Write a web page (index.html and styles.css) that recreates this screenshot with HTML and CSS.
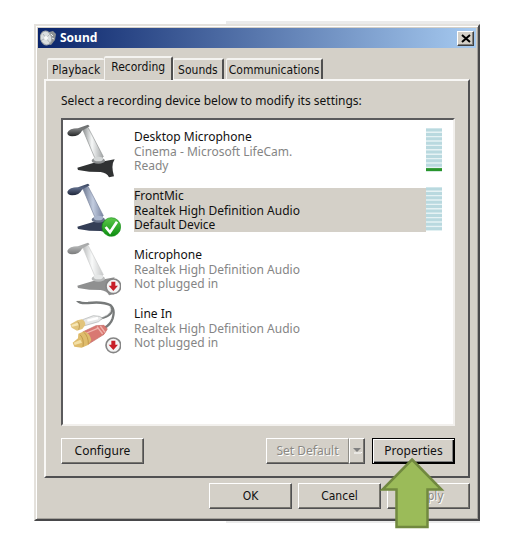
FILE: index.html
```html
<!DOCTYPE html>
<html lang="en">
<head>
<meta charset="utf-8">
<title>Sound</title>
<link rel="stylesheet" href="styles.css">
</head>
<body>
<svg class="defs" aria-hidden="true">
  <defs>
    <linearGradient id="stem" x1="0" y1="0" x2="1" y2="0">
      <stop offset="0" stop-color="#8c8f90"/><stop offset=".45" stop-color="#f6f8f8"/><stop offset="1" stop-color="#a0a3a4"/>
    </linearGradient>
    <linearGradient id="stem-blue" x1="0" y1="0" x2="1" y2="0">
      <stop offset="0" stop-color="#6d7890"/><stop offset=".5" stop-color="#c3cde0"/><stop offset="1" stop-color="#7783a0"/>
    </linearGradient>
    <linearGradient id="head" x1="0" y1="0" x2="0" y2="1">
      <stop offset="0" stop-color="#6b6d6e"/><stop offset=".4" stop-color="#77797a"/><stop offset="1" stop-color="#222425"/>
    </linearGradient>
    <linearGradient id="head-blue" x1="0" y1="0" x2="0" y2="1">
      <stop offset="0" stop-color="#34405a"/><stop offset=".4" stop-color="#5a6784"/><stop offset="1" stop-color="#1d2538"/>
    </linearGradient>
    <linearGradient id="ok" x1="0" y1="0" x2="0" y2="1">
      <stop offset="0" stop-color="#5cc94a"/><stop offset="1" stop-color="#0c8d10"/>
    </linearGradient>
    <path id="mic-stem" d="M50 16L66 10 112 98Q102 110 86 101z"/>
    <path id="mic-head" d="M4 26Q10 13 36 13L66 2 71 7 48 20Q40 37 18 37 4 36 4 26z"/>
    <path id="mic-base" d="M34 131L84 116 114 112 146 106Q134 124 144 157L129 160Q123 147 104 144L70 143 36 138z"/>
    <g id="meter-bars">
      <path d="M0 2h16M0 6.4h16M0 10.8h16M0 15.2h16M0 19.6h16M0 24h16M0 28.4h16M0 32.8h16M0 37.2h16" stroke="#b9d9df" stroke-width="3"/>
    </g>
    <g id="unplugged">
      <circle cx="142" cy="133" r="22" fill="#f4f4f4" stroke="#858585" stroke-width="5"/>
      <path d="M136 119h12v12h8l-14 16l-14-16h8z" fill="#c81e28"/>
    </g>
  </defs>
</svg>
<main class="stage">
<section class="window" aria-label="Sound">
  <header class="titlebar">
    <svg class="app-icon" viewBox="0 0 16 16" aria-hidden="true">
      <path d="M9 2l4-1 3 3-1 6-4 5-4-1z" fill="#8d9194"/>
      <ellipse cx="6" cy="8" rx="5.5" ry="7" transform="rotate(-14 6 8)" fill="#d9dddf" stroke="#a2a7aa"/>
      <path d="M3 4l3 4 4 5M10 4L6 8 2 10" stroke="#aeb4b8" fill="none"/>
      <circle cx="6" cy="8" r="2" fill="#f8f9f9"/>
      <path d="M11 4l2 2M12 8l2 1" stroke="#edf0f1"/>
    </svg>
    <h1>Sound</h1>
    <button class="close" aria-label="Close"><svg viewBox="0 0 10 9" aria-hidden="true"><path d="M1 1l8 7M9 1L1 8" stroke="#000" stroke-width="2"/></svg></button>
  </header>
  <div class="body">
    <nav class="tabs" role="tablist">
      <button class="tab playback" role="tab">Playback</button>
      <button class="tab active" role="tab" aria-selected="true">Recording</button>
      <button class="tab" role="tab">Sounds</button>
      <button class="tab last" role="tab">Communications</button>
    </nav>
    <div class="panel" role="tabpanel">
      <p class="hint">Select a recording device below to modify its settings:</p>
      <ul class="devices">
        <li class="device">
          <svg class="icon" viewBox="0 0 165 165" aria-hidden="true">
            <use href="#mic-stem" fill="url(#stem)" stroke="#8f9292" stroke-width="2"/>
            <use href="#mic-head" fill="url(#head)"/>
            <use href="#mic-base" fill="#303233"/>
            <ellipse cx="97" cy="110" rx="20" ry="9" fill="#8d9091"/><ellipse cx="97" cy="105" rx="14" ry="7" fill="#d5d8d8"/>
          </svg>
          <div class="text"><strong>Desktop Microphone</strong><span>Cinema - Microsoft LifeCam.</span><span>Ready</span></div>
          <svg class="meter" viewBox="0 0 16 44" role="img" aria-label="Input level"><use href="#meter-bars"/><path d="M0 41.6h16" stroke="#29952c" stroke-width="3"/></svg>
        </li>
        <li class="device selected">
          <svg class="icon" viewBox="0 0 165 165" aria-hidden="true">
            <use href="#mic-stem" fill="url(#stem-blue)" stroke="#77829b" stroke-width="2"/>
            <use href="#mic-head" fill="url(#head-blue)"/>
            <use href="#mic-base" fill="#343e56"/>
            <ellipse cx="97" cy="110" rx="20" ry="9" fill="#67728a"/><ellipse cx="97" cy="105" rx="14" ry="7" fill="#aab6cd"/>
            <circle cx="136" cy="132" r="28" fill="url(#ok)" stroke="#169018" stroke-width="2"/>
            <path d="M119 132l13 16 21-32" fill="none" stroke="#fff" stroke-width="8"/>
          </svg>
          <div class="text"><strong>FrontMic</strong><span>Realtek High Definition Audio</span><span>Default Device</span></div>
          <svg class="meter" viewBox="0 0 16 44" role="img" aria-label="Input level"><use href="#meter-bars"/><path d="M0 41.6h16" stroke="#b9d9df" stroke-width="3"/></svg>
        </li>
        <li class="device">
          <svg class="icon" viewBox="0 0 165 165" aria-hidden="true">
            <g opacity=".6">
            <use href="#mic-stem" fill="url(#stem)" stroke="#a8abab" stroke-width="2"/>
            <use href="#mic-head" fill="url(#head)"/>
            <use href="#mic-base" fill="#454748"/>
            <ellipse cx="97" cy="110" rx="20" ry="9" fill="#8d9091"/><ellipse cx="97" cy="105" rx="14" ry="7" fill="#d5d8d8"/>
            </g>
            <use href="#unplugged"/>
          </svg>
          <div class="text"><strong>Microphone</strong><span>Realtek High Definition Audio</span><span>Not plugged in</span></div>
        </li>
        <li class="device">
          <svg class="icon" viewBox="0 0 165 165" aria-hidden="true">
            <g fill="none" stroke-linecap="round">
              <path d="M34 -1Q42 8 66 6Q112 1 134 13Q148 26 140 52Q134 70 114 82" stroke="#777a7a" stroke-width="7"/>
              <path d="M136 16Q146 38 114 50L100 54" stroke="#777a7a" stroke-width="6"/>
              <path d="M132 17Q142 36 112 48" stroke="#bcbfbf" stroke-width="2"/>
            </g>
            <path d="M50 56L82 44 100 46 110 51 98 62 56 74z" fill="#e6e7e7" stroke="#aeb0b0" stroke-width="2"/>
            <path d="M64 59l32-8" stroke="#fff" stroke-width="7"/>
            <path d="M13 70L34 58 48 55Q58 60 58 72L49 84 33 89 17 80z" fill="#e2c47b"/>
            <path d="M16 72l18-7 4 8-19 4z" fill="#f6e6b4"/><path d="M35 62q9 8 3 24" stroke="#b18d43" stroke-width="2" fill="none"/>
            <path d="M50 93L90 74 114 73 124 84 114 100 66 130 50 117z" fill="#d97872" stroke="#c16a64" stroke-width="2"/>
            <path d="M62 96l33-14M93 77l17 22M103 75l14 19" stroke="#f0b4ae" stroke-width="4"/>
            <path d="M20 125L36 112 37 98 54 91Q72 96 76 118L66 132 47 140 25 137z" fill="#dfbc6c"/>
            <path d="M23 125l20-9 5 9-22 7z" fill="#f4e0a5"/><path d="M42 101q13 13 9 36M54 94q14 14 13 36" stroke="#b08a3d" stroke-width="2" fill="none"/>
            <use href="#unplugged"/>
          </svg>
          <div class="text"><strong>Line In</strong><span>Realtek High Definition Audio</span><span>Not plugged in</span></div>
        </li>
      </ul>
      <div class="actions">
        <button class="btn">Configure</button>
        <div class="split">
          <button class="btn main" disabled>Set Default</button>
          <button class="btn more" disabled aria-label="More defaults"><svg viewBox="0 0 8 5" aria-hidden="true"><path d="M1 5h7l1-1" stroke="#fff" fill="none"/><path d="M0 0h8L4 4z" fill="#808080"/></svg></button>
        </div>
        <button class="btn default">Properties</button>
      </div>
    </div>
    <footer class="footer">
      <button class="btn">OK</button>
      <button class="btn">Cancel</button>
      <div class="apply">
        <button class="btn" disabled>Apply</button>
        <svg class="pointer" viewBox="0 0 66 72" aria-hidden="true"><path d="M33 2.5L62.5 32.5H48.5V70H17.5V32.5H3.5z" fill="#9bbb59" stroke="#71893f" stroke-width="2.5"/></svg>
      </div>
    </footer>
  </div>
</section>
</main>
</body>
</html>
```
FILE: styles.css
```css
* { box-sizing: border-box; }
body {
  display: flow-root;
  margin: 0;
  min-height: 100vh;
  background: #fff;
  color: #111;
  font: 12px/14px "Noto Sans", "Open Sans", sans-serif;
}
.defs { position: absolute; width: 0; height: 0; }
.stage {
  margin: 21px 31px 0 34px;
  padding: 3px 0 2px;
  background: linear-gradient(#ebebeb, #ebebeb) right / 57% 100% no-repeat;
}
.window {
  padding: 2px;
  background: #d4d0c8;
  border: 2px solid;
  border-color: #e4e1dc #48484a #48484a #e4e1dc;
  box-shadow: inset 1px 1px #fff, inset -1px -1px #a5a29c;
}
.titlebar {
  display: flex;
  align-items: center;
  height: 20px;
  padding: 0 2px;
  background: linear-gradient(90deg, #0a246a, #a6caf0);
}
.app-icon { width: 16px; height: 16px; }
h1 {
  flex: 1;
  margin: 0 0 0 4px;
  color: #fff;
  font: bold 12px/16px "Noto Sans", sans-serif;
}
button { font: inherit; color: inherit; margin: 0; }
.close {
  display: grid;
  place-items: center;
  width: 17px;
  height: 15px;
  padding: 0;
  background: #d4d0c8;
  border: 1px solid;
  border-color: #fff #404040 #404040 #fff;
  box-shadow: inset -1px -1px #808080;
}
.close svg { width: 10px; height: 9px; }
.body { padding: 8px 6px 8px; }
.tabs {
  display: flex;
  align-items: flex-end;
  height: 23px;
  padding-left: 3px;
  font: 12px/14px "DejaVu Sans Condensed", "DejaVu Sans", sans-serif;
}
.tab {
  height: 21px;
  padding: 0 4px;
  background: #d4d0c8;
  border: 0 solid;
  border-width: 2px 2px 0 1px;
  border-color: #f4f3f0 #505050 #505050 #f4f3f0;
  border-radius: 2px 2px 0 0;
  white-space: nowrap;
}
.playback { border-right-width: 0; }
.active {
  position: relative;
  height: 24px;
  margin-bottom: -1px;
  padding: 0 6px 4px;
}
.last { margin-left: 2px; padding: 0 2px; }
.panel {
  padding: 13px 13px 12px 15px;
  border: 2px solid;
  border-color: #f8f7f5 #505052 #505052 #f8f7f5;
}
.hint { margin: 0; }
.devices {
  display: flex;
  flex-direction: column;
  gap: 4px;
  height: 308px;
  margin: 10px 0 12px;
  padding: 4px 11px 4px 3px;
  list-style: none;
  background: #fff;
  border: 2px solid;
  border-color: #5a5a5c #f2f0ed #f2f0ed #5a5a5c;
}
.device { display: flex; height: 55px; }
.icon { width: 55px; height: 55px; }
.text {
  display: flex;
  flex: 1;
  flex-direction: column;
  align-self: flex-start;
  margin: 5px 0 0 13px;
  color: #858585;
  line-height: 15px;
}
.text strong { font-weight: 400; color: #111; }
.text span:last-child { line-height: 14px; }
.selected .text { background: #d4d0c8; color: #111; }
.meter { width: 16px; height: 44px; margin-top: 4px; background: #e6f2f4; }
.actions { display: flex; gap: 7px; }
.split { display: flex; margin-left: auto; }
.btn {
  width: 83px;
  height: 26px;
  padding: 0 0 1px;
  background: #d4d0c8;
  border: 1px solid;
  border-color: #fff #505052 #505052 #fff;
  box-shadow: inset -1px -1px #77756f;
}
.btn:disabled { color: #8b8984; text-shadow: 1px 1px #fff; }
.btn.main { border-right-color: #908e88; box-shadow: inset 0 -1px #77756f; }
.btn.more { display: grid; place-items: center; width: 16px; }
.more svg { width: 8px; height: 5px; overflow: visible; }
.btn.default { border-color: #000; box-shadow: inset 1px 1px #fff, inset -1px -1px #000, inset -2px -2px #808080; }
.footer {
  display: flex;
  justify-content: flex-end;
  gap: 6px;
  padding-top: 5px;
  font: 12px/14px "DejaVu Sans Condensed", "DejaVu Sans", sans-serif;
}
.apply { position: relative; }
.pointer { position: absolute; left: -8px; top: -26px; width: 66px; height: 72px; }
```
